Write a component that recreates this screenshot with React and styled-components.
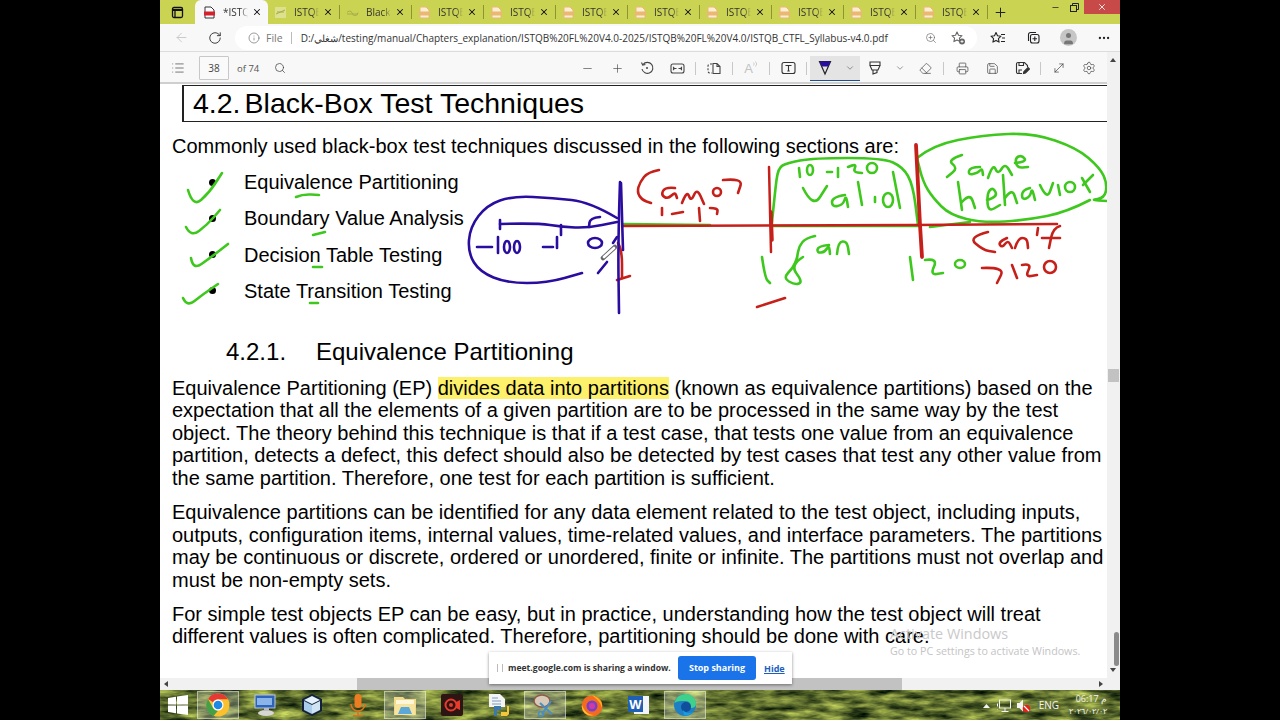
import React from "react";
import styled, { createGlobalStyle } from "styled-components";
import { X, Plus, Minus, ArrowLeft, RotateCw, Info, Search, ZoomIn, MoreHorizontal, List, ChevronDown, Printer, Save, Settings, MoveDiagonal, Eraser, User } from "lucide-react";

const Global = createGlobalStyle`
  html, body { margin: 0; padding: 0; background: #000; }
  body { font-family: "Liberation Sans", Arial, sans-serif; }
  #root { width: 1280px; height: 720px; overflow: hidden; }
`;

const Stage = styled.div`
  width: 1280px; height: 720px; background: #000; display: flex; justify-content: center;
`;
const Screen = styled.div`
  width: 960px; height: 720px; display: flex; flex-direction: column; position: relative; overflow: hidden; background: #fff;
`;

const TabStrip = styled.div`
  height: 24px; background: #cbd352; display: flex; align-items: stretch; flex: none;
`;
const WindowIcon = styled.div`
  width: 35px; display: flex; align-items: center; justify-content: center; color: #111;
`;
const Tab = styled.div`
  width: ${p => p.$active ? "73px" : "72px"};
  display: flex; align-items: center; position: relative; padding-left: ${p => p.$active ? "8px" : "6px"}; box-sizing: border-box;
  background: ${p => p.$active ? "#f8f8f8" : "transparent"};
  border-radius: ${p => p.$active ? "6px 6px 0 0" : "0"};
  &::after {
    content: ""; position: absolute; right: 0; top: 5px; bottom: 5px; width: 1px;
    background: ${p => p.$active ? "transparent" : "#8d9430"};
  }
`;
const TabLabel = styled.span`
  font: 10px "Open Sans", sans-serif; color: #333; width: 25px; margin-left: 7px; overflow: hidden; white-space: nowrap; flex: none;
  mask-image: linear-gradient(90deg, #000 70%, transparent 100%);
`;
const TabClose = styled.span`
  display: flex; color: #111; margin-left: 4px;
`;
const NewTab = styled.div`
  width: 24px; display: flex; align-items: center; justify-content: center; color: #222;
`;
const WindowControls = styled.div`
  margin-left: auto; display: flex; align-items: flex-start; height: 14px;
`;
const WinBtn = styled.div`
  width: ${p => p.$close ? "36px" : "19px"}; height: 14px; display: flex; align-items: center; justify-content: center;
  background: ${p => p.$close ? "#c84a48" : "transparent"}; color: ${p => p.$close ? "#fff" : "#222"};
`;

const AddressRow = styled.div`
  height: 28px; background: #f8f8f8; display: flex; align-items: center; flex: none; border-bottom: 1px solid #dcdcdc; box-sizing: border-box;
`;
const NavBtn = styled.div`
  width: 33px; display: flex; justify-content: center; color: ${p => p.$off ? "#c4c4c4" : "#333"};
  &:first-child { margin-left: 5px; }
`;
const UrlBox = styled.div`
  width: 742px; height: 24px; background: #fff; border-radius: 12px; margin-left: 4px; display: flex; align-items: center; padding-left: 13px; box-sizing: border-box;
  font: 11px "Open Sans", sans-serif; color: #444; flex: none;
`;
const UrlScheme = styled.span`
  color: #777; margin-left: 6px; font-size: 10.5px; padding-right: 8px; border-right: 1px solid #bbb; line-height: 12px;
`;
const UrlText = styled.span`
  margin-left: 9px; white-space: nowrap; font-size: 10px; color: #333;
`;
const UrlTools = styled.div`
  margin-left: auto; display: flex; gap: 14px; padding-right: 11px; color: #666; align-items: center;
`;
const BrowserTools = styled.div`
  display: flex; align-items: center; gap: 20px; margin-left: 13px; color: #222;
`;
const Avatar = styled.div`
  width: 17px; height: 17px; border-radius: 50%; background: #c6c6c6; display: flex; align-items: flex-end; justify-content: center; color: #777; overflow: hidden;
`;

const Workspace = styled.div`
  flex: 1; min-height: 0; display: flex;
`;
const DocColumn = styled.div`
  flex: 1; min-width: 0; display: flex; flex-direction: column;
`;
const PdfBar = styled.div`
  height: 32px; background: #f8f8f8; display: flex; align-items: center; flex: none; border-bottom: 2px solid #cfcfcf; box-sizing: border-box; color: #444; padding: 2px 3px 0 11px;
`;
const PageInput = styled.div`
  width: 30px; height: 24px; border: 1px solid #c8c8c8; background: #fafafa; margin-left: 14px; display: flex; align-items: center; justify-content: center; font: 10px "Open Sans", sans-serif; color: #444; border-radius: 1px; box-sizing: border-box; flex: none;
`;
const PageCount = styled.span`
  font: 9.5px "Open Sans", sans-serif; color: #555; margin-left: 8px; white-space: nowrap; flex: none;
`;
const FindBtn = styled.div`
  margin-left: 15px; display: flex; color: #444;
`;
const ToolGroup = styled.div`
  margin-left: auto; display: flex; align-items: center;
`;
const Tool = styled.div`
  width: ${p => p.$w || 30}px; height: 25px; display: flex; align-items: center; justify-content: center; flex: none; color: #444;
`;
const Sep = styled.div`
  width: 1px; height: 13px; background: #c8c8c8; margin: 0 3px; flex: none;
`;
const ActiveTool = styled.div`
  width: 50px; height: 25px; display: flex; background: #e4e4e4; border-bottom: 1px solid #1f4f8f; box-sizing: border-box; flex: none;
`;
const ReadAloud = styled.span`
  font: 13px "Liberation Sans", sans-serif; color: #c2c2c2; display: flex; align-items: flex-start;
`;

const Page = styled.div`
  flex: 1; min-height: 0; background: #fff; color: #000; position: relative; padding-left: 12px; overflow: hidden;
  font: 20px/22.5px "Liberation Sans", Arial, sans-serif;
`;
const HeadingBox = styled.div`
  margin: 1px 0 0 10px; height: 37px; border-style: solid; border-color: #222; border-width: 1px 0 1px 2px; display: flex; align-items: center; padding-left: 9px; box-sizing: border-box;
  font-size: 28.5px; white-space: nowrap;
`;
const HeadingNum = styled.span`margin-right: 4px;`;
const Intro = styled.p`margin: 13px 0 0; white-space: nowrap;`;
const Bullets = styled.ul`
  list-style: none; margin: 13.5px 0 0; padding: 0 0 0 72px;
`;
const BulletItem = styled.li`
  height: 36.3px; position: relative; white-space: nowrap;
  &::before {
    content: ""; position: absolute; left: -35px; top: 7.5px; width: 7px; height: 7px; border-radius: 50%; background: #000;
  }
`;
const SubHeading = styled.h3`
  margin: 22.8px 0 0 54px; font-weight: 400; font-size: 24px; line-height: 26px; display: flex; white-space: nowrap;
`;
const SubNum = styled.span`width: 90px;`;
const Para = styled.p`margin: 11.8px 0 0; white-space: nowrap;`;
const Line = styled.span`display: block; height: 22.5px;`;
const Mark = styled.span`background: #fdf06a;`;
const Ink = styled.svg`
  position: absolute; left: 0; top: 0; pointer-events: none;
`;
const Watermark = styled.div`
  position: absolute; left: 730px; top: 541px; color: #c9c9c9; font: 14.4px "Open Sans", sans-serif; white-space: nowrap; line-height: 18px;
`;
const WatermarkSub = styled.div`
  font-size: 10.7px; color: #c4c4c4; line-height: 16px;
`;

const VScroll = styled.div`
  width: 13px; flex: none; background: #f1f1f1; position: relative;
`;
const VThumb = styled.div`
  position: absolute; left: 7px; width: 5px; top: 580px; height: 34px; background: #8b8b8b; border-radius: 3px;
`;
const VMark = styled.div`
  position: absolute; left: 1px; right: 1px; top: 317px; height: 13px; background: #c2c2c2;
`;
const Arrow = styled.div`
  position: absolute; left: 3px; width: 0; height: 0; border-left: 3px solid transparent; border-right: 3px solid transparent;
  ${p => p.$up ? "top: 6px; border-bottom: 4px solid #444;" : "bottom: 6px; border-top: 4px solid #444;"}
`;
const HScroll = styled.div`
  height: 12px; flex: none; background: #f1f1f1; position: relative;
`;
const HThumb = styled.div`
  position: absolute; left: 197px; width: 545px; top: 0; bottom: 0; background: #c2c2c2;
`;
const HArrow = styled.div`
  position: absolute; top: 3px; width: 0; height: 0; border-top: 3px solid transparent; border-bottom: 3px solid transparent;
  ${p => p.$left ? "left: 4px; border-right: 4px solid #444;" : "right: 17px; border-left: 4px solid #444;"}
`;

const ShareBar = styled.div`
  position: absolute; left: 329px; top: 652px; width: 303px; height: 32px; background: #fff; box-shadow: 0 1px 3px rgba(0,0,0,.45);
  display: flex; align-items: center; box-sizing: border-box; padding-left: 8px; z-index: 3;
`;
const Grip = styled.span`
  width: 4px; height: 8px; border-left: 1px solid #bbb; border-right: 1px solid #bbb; margin-right: 5px; flex: none;
`;
const ShareText = styled.span`
  font: 700 8.6px "Open Sans", sans-serif; color: #333; white-space: nowrap; width: 162px; flex: none;
`;
const StopBtn = styled.div`
  margin-left: 8px; width: 78px; height: 24px; background: #1a73e8; border-radius: 3px; color: #fff; font: 700 9px/24px "Open Sans", sans-serif; text-align: center; flex: none;
`;
const HideLink = styled.span`
  margin-left: 8px; color: #1a5fc0; font: 700 9px "Open Sans", sans-serif; text-decoration: underline;
`;

const Taskbar = styled.div`
  height: 30px; flex: none; display: flex; align-items: center; position: relative; overflow: hidden; background: #5e6c2c;
`;
const Wallpaper = styled.svg`
  position: absolute; left: 0; top: 0;
`;
const StartSlot = styled.div`
  width: 35px; height: 28px; display: flex; align-items: center; justify-content: center; flex: none; position: relative;
`;
const TaskSlot = styled.div`
  width: 42px; height: 28px; margin: 0 2.35px; display: flex; align-items: center; justify-content: center; flex: none; box-sizing: border-box; position: relative;
  ${p => p.$on ? "background: rgba(255,255,255,.25); border: 1px solid rgba(255,255,255,.45);" : ""}
`;
const Tray = styled.div`
  margin-left: auto; display: flex; align-items: center; color: #f4f4f4; font: 10px "Open Sans", sans-serif; padding-right: 13px; position: relative;
`;
const TrayIcon = styled.span`
  display: flex; margin-right: ${p => p.$m || 6}px;
`;
const TrayLang = styled.span`margin: 0 10px 0 0;`;
const Clock = styled.div`
  display: flex; flex-direction: column; align-items: flex-end; line-height: 12px; font-size: 9px;
`;
const ClockDate = styled.span`font-size: 8px;`;

function smooth(pts) {
  if (pts.length < 3) return "M" + pts.map(p => p.join(" ")).join("L");
  let d = `M${pts[0][0]} ${pts[0][1]}`;
  for (let i = 1; i < pts.length - 1; i++) {
    const mx = (pts[i][0] + pts[i + 1][0]) / 2, my = (pts[i][1] + pts[i + 1][1]) / 2;
    d += `Q${pts[i][0]} ${pts[i][1]} ${mx} ${my}`;
  }
  const l = pts[pts.length - 1];
  return d + `L${l[0]} ${l[1]}`;
}

const G = "#3ec81e", R = "#c6201a", P = "#2a0d9e";
const inkGreen = [
  [[188,190],[193,207],[209,193],[222,173]],
  [[186,227],[191,237],[207,225],[220,210]],
  [[191,258],[193,270],[210,258],[228,244]],
  [[183,298],[187,307],[202,295],[218,284]],
  [[296,197],[303,194],[319,195]],
  [[313,235],[325,232]],
  [[313,267],[322,267]],
  [[310,303],[318,303]],
  [[623,224],[710,225]],
  [[773,226],[920,226]],
  [[772,222],[775,192],[778,168],[787,163],[813,158],[883,158],[903,167],[913,185],[918,225]],
  [[799,168],[800,177]],
  [[827,172],[832,172]],
  [[838,168],[838,177]],
  [[848,167],[857,163],[853,172],[862,173]],
  [[803,188],[813,208],[827,186]],
  [[845,195],[832,197],[832,207],[843,205],[846,195],[848,207]],
  [[858,182],[862,205]],
  [[875,197],[875,202]],
  [[893,172],[900,208]],
  [[917,158],[933,145],[983,135],[1033,133],[1077,148],[1100,168],[1107,183],[1105,198],[1090,200],[1107,201]],
  [[1090,200],[1067,212],[1027,220],[983,223],[950,215],[933,198],[923,182],[917,158]],
  [[930,227],[970,222]],
  [[962,155],[947,160],[958,168],[947,177]],
  [[980,167],[970,167],[968,175],[978,173],[982,168],[983,175]],
  [[988,178],[993,163],[998,175],[1005,163],[1012,175]],
  [[1015,163],[1027,162],[1022,155],[1015,158],[1017,168],[1028,167]],
  [[958,182],[962,210]],
  [[962,202],[970,193],[975,208]],
  [[987,200],[998,197],[993,187],[987,193],[988,212],[1000,205]],
  [[1003,175],[1005,205]],
  [[1005,198],[1012,188],[1017,203]],
  [[1030,188],[1022,190],[1022,200],[1030,197],[1032,188],[1035,200]],
  [[1040,185],[1047,200],[1053,183]],
  [[1058,185],[1060,195]],
  [[1082,178],[1090,192]],
  [[1083,185],[1093,175]],
  [[815,236],[806,238],[799,246],[797,258]],
  [[829,245],[818,246],[817,253],[825,252],[829,245],[830,254]],
  [[837,254],[838,242],[847,241],[849,254]],
  [[762,257],[765,278],[770,283]],
  [[803,257],[790,265],[803,282],[795,285],[783,278],[793,268],[797,258]],
  [[910,257],[913,280]],
  [[925,260],[938,258],[930,275],[943,273]],
];
const inkGreenEll = [[810,170,3,5],[872,168,5,5],[888,200,5,7],[1070,187,5,5],[960,264,5,4]];
const inkRed = [
  [[623,226],[769,226],[1057,224]],
  [[659,170],[648,172],[640,182],[637,192],[642,200],[651,203]],
  [[675,188],[665,187],[661,195],[668,199],[675,192],[677,198]],
  [[682,203],[687,190],[691,202],[697,188],[704,204]],
  [[723,180],[743,178],[738,193]],
  [[662,208],[662,215]],
  [[672,214],[683,212]],
  [[699,208],[700,221]],
  [[710,208],[718,208],[717,214]],
  [[988,232],[968,237],[983,250],[995,252]],
  [[1007,238],[998,242],[1002,248],[1008,240],[1012,248]],
  [[1015,248],[1018,238],[1027,238],[1028,248]],
  [[1038,228],[1037,235]],
  [[1060,226],[1053,228],[1049,248]],
  [[1042,238],[1060,238]],
  [[982,268],[1005,267],[997,283]],
  [[1012,265],[1017,278]],
  [[1022,265],[1032,263],[1025,277],[1037,275]],
  [[757,307],[785,298]],
  [[618,243],[622,250],[622,278]],
  [[617,280],[630,276]],
];
const inkPurple = [
  [[617,218],[590,202],[553,198],[513,196],[487,205],[470,227],[468,253],[480,272],[507,283],[547,283],[582,273]],
  [[500,220],[500,229]],
  [[500,224],[537,223],[563,227],[587,228],[617,222]],
  [[561,225],[561,235]],
  [[600,217],[590,218],[589,227]],
  [[477,247],[492,247]],
  [[498,237],[498,253]],
  [[543,247],[553,247]],
  [[557,237],[557,248]],
  [[620,182],[618,240],[619,313]],
  [[621,183],[623,250]],
  [[598,273],[607,262]],
  [[613,243],[617,237]],
];
const inkPurpleEll = [[507,247,3,6],[517,247,3,6],[595,243,7,5]];

const Annotations = () => (
  <Ink width="947" height="594" viewBox="160 84 947 594" fill="none" strokeLinecap="round" strokeLinejoin="round">
    {inkGreen.map((p, i) => <path key={i} d={smooth(p)} stroke={G} strokeWidth="2.6" />)}
    {inkGreenEll.map(([x, y, a, b], i) => <ellipse key={i} cx={x} cy={y} rx={a} ry={b} stroke={G} strokeWidth="2.6" />)}
    {inkRed.map((p, i) => <path key={i} d={smooth(p)} stroke={R} strokeWidth="2.6" />)}
    <ellipse cx="717" cy="192" rx="4" ry="4" stroke={R} strokeWidth="2.6" />
    <ellipse cx="1050" cy="267" rx="6" ry="6" stroke={R} strokeWidth="2.6" />
    <path d="M769 167L771 252" stroke={R} strokeWidth="2.5" />
    <path d="M771 212L772 240" stroke={R} strokeWidth="3.5" />
    <path d="M916 145L920 225L922 257" stroke={R} strokeWidth="3.8" />
    {inkPurple.map((p, i) => <path key={i} d={smooth(p)} stroke={P} strokeWidth="2.6" />)}
    {inkPurpleEll.map(([x, y, a, b], i) => <ellipse key={i} cx={x} cy={y} rx={a} ry={b} stroke={P} strokeWidth="2.6" />)}
    <path d="M603 258L615 247" stroke="#666" strokeWidth="4.5" />
    <path d="M604 257L614 248" stroke="#fff" strokeWidth="2.6" />
  </Ink>
);

const PdfIcon = ({ color = "#e9b872", active }) => (
  <svg width="13" height="13" viewBox="0 0 13 13" fill="none">
    <path d="M2 1h6l3 3v8H2z" fill={active ? "#fff" : "#fbeed3"} stroke={active ? "#333" : color} />
    <rect x="1" y="5.500" width="11" height="4" fill={active ? "#d3212d" : color} />
  </svg>
);
const LinkIcon = ({ wide }) => (
  <svg width="13" height="13" viewBox="0 0 13 13" fill="none" stroke="#a6ad4a" strokeWidth="1">
    {wide ? <path d="M1 6.500a3 3 0 0 1 5 0a3 3 0 0 0 6 0M1 8h11" /> : <><rect x="1" y="1" width="11" height="11" fill="#dde08c" stroke="none" /><path d="M2 8l9-4M3 6h7" /></>}
  </svg>
);
const WindowGlyph = () => (
  <svg width="13" height="13" viewBox="0 0 13 13" fill="none" stroke="#111" strokeWidth="1.300">
    <rect x="1.500" y="1.500" width="10" height="10" rx="1.500" /><path d="M1.500 4h10" strokeWidth="2" /><path d="M4 4v7.500" />
  </svg>
);
const RestoreGlyph = () => (
  <svg width="9" height="9" viewBox="0 0 9 9" fill="none" stroke="#222"><rect x=".5" y="2.500" width="6" height="6" /><path d="M2.500 2.500v-2h6v6h-2" /></svg>
);
const StarList = () => (
  <svg width="16" height="14" viewBox="0 0 16 14" fill="none" stroke="#222" strokeWidth="1.100" strokeLinejoin="round">
    <path d="M6 1.500l1.500 3.300 3.500.4-2.600 2.400.7 3.500L6 9.400l-3.100 1.700.7-3.500L1 5.200l3.500-.4z" /><path d="M11 3.500h4M12 7h3M11 10.500h4" />
  </svg>
);
const StarPlus = () => (
  <svg width="15" height="14" viewBox="0 0 15 14" fill="none" stroke="#666" strokeWidth="1.100" strokeLinejoin="round">
    <path d="M6 1l1.500 3.300 3.500.4-2.600 2.400.7 3.500L6 8.900l-3.100 1.700.7-3.500L1 4.700l3.500-.4z" /><circle cx="11" cy="10.500" r="3" fill="#666" stroke="none" /><path d="M9.500 10.500h3M11 9v3" stroke="#fff" strokeWidth=".8" />
  </svg>
);
const Collections = () => (
  <svg width="14" height="14" viewBox="0 0 14 14" fill="none" stroke="#222" strokeWidth="1.100">
    <path d="M2.500 10V3.500a2 2 0 0 1 2-2H10" /><rect x="4.500" y="3.500" width="8.500" height="8.500" rx="2" /><path d="M8.800 5.500v4.500M6.500 7.700h4.500" />
  </svg>
);
const RotateGlyph = () => (
  <svg width="14" height="14" viewBox="0 0 14 14" fill="none" stroke="#444" strokeWidth="1.100">
    <path d="M3 3.500a5.500 5.500 0 1 1-1 4.500" /><path d="M1.500 1.500l1.200 2.600 2.700-.6" /><circle cx="7" cy="7" r="1" fill="#444" stroke="none" />
  </svg>
);
const FitGlyph = () => (
  <svg width="15" height="13" viewBox="0 0 15 13" fill="none" stroke="#444" strokeWidth="1.100">
    <rect x="1" y="2" width="13" height="9" rx="2" /><path d="M3.500 6.500h3M8.500 6.500h3" /><path d="M3.500 5.500v2l1-1zM11.500 5.500v2l-1-1z" fill="#444" />
  </svg>
);
const PagesGlyph = () => (
  <svg width="14" height="13" viewBox="0 0 14 13" fill="none" stroke="#444" strokeWidth="1.100">
    <path d="M5 2H3a2 2 0 0 0-2 2v5a2 2 0 0 0 2 2h2" strokeDasharray="2 1.500" /><path d="M6 1.500h4l3 3v7H6zM10 1.500v3h3" />
  </svg>
);
const Waves = () => (
  <svg width="5" height="8" viewBox="0 0 5 8" fill="none" stroke="#c2c2c2" strokeWidth=".8"><path d="M.5 1.500q1.500 1.500 0 3M2.500.5q2.500 2.500 0 5" /></svg>
);
const TextBoxGlyph = () => (
  <svg width="15" height="14" viewBox="0 0 15 14" fill="none" stroke="#333" strokeWidth="1.100">
    <rect x="1" y="1.500" width="13" height="11" rx="2" /><path d="M4.500 4.500h6M7.500 4.500v5.500M6.300 10h2.400" />
  </svg>
);
const PenIcon = () => (
  <svg width="16" height="16" viewBox="0 0 16 16" fill="none">
    <path d="M2.500 1.500h11L8 14z" stroke="#222" strokeWidth="1.200" />
    <path d="M2.500 1.500h11l-2.400 5H5z" fill="#2a0d9e" />
  </svg>
);
const HighlighterIcon = () => (
  <svg width="16" height="16" viewBox="0 0 16 16" fill="none" stroke="#333" strokeWidth="1.100">
    <path d="M2.500 2h11M3 5.500h10L11 10H5zM6 10v4l4-1.500V10M3 2v3.500M13 2v3.500" />
  </svg>
);
const SaveEdit = () => (
  <svg width="15" height="14" viewBox="0 0 15 14" fill="none" stroke="#333" strokeWidth="1.100">
    <path d="M7 12.500H3a1.500 1.500 0 0 1-1.500-1.500V3A1.500 1.500 0 0 1 3 1.500h6.500l3 3V6" /><path d="M4 1.500v3h4.500v-3M4 12v-3h3" />
    <path d="M8.500 12.500l.5-2 4-4 1.500 1.500-4 4z" fill="#333" />
  </svg>
);
const WinLogo = () => (
  <svg width="20" height="20" viewBox="0 0 20 20" fill="#fff"><path d="M0 3l8-1.200V9.500H0zM9 1.600L20 0v9.500H9zM0 10.500h8v7.700L0 17zM9 10.500h11V20L9 18.400z" /></svg>
);
const Chrome = () => (
  <svg width="24" height="24" viewBox="0 0 24 24">
    <circle cx="12" cy="12" r="11.500" fill="#fbc02d" />
    <path d="M12 .5a11.500 11.500 0 0 1 10 5.750H12a5.750 5.750 0 0 0-5 2.900L2.100 5.900A11.500 11.500 0 0 1 12 .5z" fill="#e53935" />
    <path d="M2.100 5.900L7 14.900a5.750 5.750 0 0 0 5 2.850L7.500 23A11.500 11.500 0 0 1 2.100 5.900z" fill="#43a047" />
    <circle cx="12" cy="12" r="5.500" fill="#fff" /><circle cx="12" cy="12" r="4.300" fill="#1e88e5" />
  </svg>
);
const RemoteIcon = () => (
  <svg width="24" height="24" viewBox="0 0 24 24">
    <rect x="2" y="2" width="20" height="13" fill="#2d63b8" stroke="#b9c8dc" /><rect x="4" y="5" width="15" height="7" fill="#8bb5e8" />
    <ellipse cx="13" cy="20" rx="8" ry="3" fill="#d6d6d6" /><rect x="11" y="15" width="5" height="3" fill="#bbb" />
  </svg>
);
const CubeIcon = () => (
  <svg width="24" height="24" viewBox="0 0 24 24">
    <path d="M12 1l10 5v12l-10 5L2 18V6z" fill="#12203a" />
    <path d="M12 3l8 4-8 4-8-4z" fill="#e4f1fb" /><path d="M4 8l8 4v9l-8-4z" fill="#a9cdea" /><path d="M20 8l-8 4v9l8-4z" fill="#cfe3f2" />
  </svg>
);
const MicIcon = () => (
  <svg width="24" height="24" viewBox="0 0 24 24" fill="none">
    <rect x="8.500" y="1" width="7" height="14" rx="3.500" fill="#ee7d22" />
    <path d="M5 11a7 7 0 0 0 14 0M12 18v4M7 22.500h10" stroke="#d9731e" strokeWidth="1.600" />
  </svg>
);
const FolderIcon = () => (
  <svg width="24" height="24" viewBox="0 0 24 24">
    <path d="M1 4h9l2 2h11v16H1z" fill="#f1d98a" /><rect x="3" y="7" width="18" height="5" fill="#fdf6d8" />
    <rect x="2" y="11" width="20" height="11" fill="#f6e3a0" /><path d="M8 14h8l3 7H5z" fill="#5aa7d8" />
  </svg>
);
const RecIcon = () => (
  <svg width="24" height="24" viewBox="0 0 24 24" fill="none">
    <rect x="1" y="1" width="22" height="22" rx="2" fill="#2c1512" />
    <circle cx="11" cy="12" r="5.500" stroke="#e83b2e" strokeWidth="2" /><circle cx="11" cy="12" r="2" fill="#e83b2e" /><path d="M16 9l4-2v10l-4-2z" fill="#e83b2e" />
  </svg>
);
const PyIcon = () => (
  <svg width="24" height="24" viewBox="0 0 24 24">
    <path d="M3 1h11l5 5v8H3z" fill="#f4f4f4" /><path d="M6 5h6M6 8h9M6 11h9" stroke="#7a9bc4" />
    <path d="M8 13h7v4H11v6H8z" fill="#3d78ad" /><path d="M21 13v6h-6v4h6l2-2v-8z" fill="#f2c83a" />
  </svg>
);
const SnipIcon = () => (
  <svg width="24" height="24" viewBox="0 0 24 24" fill="none">
    <ellipse cx="9" cy="8" rx="8" ry="6" fill="#d8c9b8" stroke="#8c5a4a" strokeWidth="1.500" />
    <path d="M7 10l12 11M18 8L9 21" stroke="#4a8fc0" strokeWidth="2" /><circle cx="8" cy="21" r="2.500" stroke="#4a8fc0" strokeWidth="1.500" />
  </svg>
);
const FoxIcon = () => (
  <svg width="24" height="24" viewBox="0 0 24 24">
    <circle cx="12" cy="13" r="10.500" fill="#f26b21" /><path d="M12 2c6 2 11 6 10 13C20 8 16 6 12 2z" fill="#ffb01f" />
    <circle cx="12" cy="13" r="5.500" fill="#7b3fc4" /><circle cx="12" cy="13" r="3" fill="#ce3ba4" /><path d="M2 12c2 6 6 10 12 10-6 2-13-3-12-10z" fill="#fcc431" />
  </svg>
);
const WordIcon = () => (
  <svg width="24" height="24" viewBox="0 0 24 24">
    <rect x="7" y="3" width="15" height="18" fill="#f2f6fb" /><rect x="1" y="3" width="15" height="16" fill="#1f5fb4" />
    <text x="8.500" y="16" textAnchor="middle" fill="#fff" fontSize="13" fontWeight="700" fontFamily="Liberation Sans">W</text>
  </svg>
);
const EdgeIcon = () => (
  <svg width="24" height="24" viewBox="0 0 24 24">
    <circle cx="12" cy="12" r="11" fill="#1f7fc4" />
    <path d="M1.500 10C3 3 9 .5 14 1c5 .6 9 4.500 9 10 0 3-3 4.500-6 4 2-3 0-7-4.500-7C8 8 4 8 1.500 10z" fill="#3fd08a" />
    <circle cx="13" cy="14" r="5" fill="#0f4f9c" /><path d="M10 17c2 3 6 4 10 2-2 3-6 4-9 3z" fill="#1a9de0" />
  </svg>
);
const TrayUp = () => (
  <svg width="7" height="5" viewBox="0 0 7 5" fill="#f4f4f4"><path d="M0 5l3.500-4L7 5z" /></svg>
);
const NetworkIcon = () => (
  <svg width="15" height="15" viewBox="0 0 15 15" fill="none" stroke="#f4f4f4" strokeWidth="1">
    <rect x="2.500" y="2" width="11" height="8" /><path d="M8 10v3M4.500 13.500h7" /><path d="M.5 5.500v3M.5 11v.5" />
  </svg>
);
const VolumeIcon = () => (
  <svg width="15" height="15" viewBox="0 0 15 15">
    <path d="M1 5h2.500L7 1.500v12L3.500 10H1z" fill="#f4f4f4" /><circle cx="10.500" cy="10.500" r="3.800" fill="#e0241c" /><path d="M8 8l5 5" stroke="#fff" strokeWidth="1.100" />
  </svg>
);

const taskApps = [
  { c: <Chrome />, on: true }, { c: <RemoteIcon /> }, { c: <CubeIcon /> }, { c: <MicIcon /> },
  { c: <FolderIcon />, on: true }, { c: <RecIcon /> }, { c: <PyIcon /> }, { c: <SnipIcon />, on: true },
  { c: <FoxIcon /> }, { c: <WordIcon /> }, { c: <EdgeIcon />, on: true },
];
const tabs = ["ISTQB", "Black", "ISTQB", "ISTQB", "ISTQB", "ISTQB", "ISTQB", "ISTQB", "ISTQB", "ISTQB"];

export default function App() {
  return (
    <Stage>
      <Global />
      <Screen>
        <TabStrip>
          <WindowIcon><WindowGlyph /></WindowIcon>
          <Tab $active>
            <PdfIcon active /><TabLabel>*ISTQ</TabLabel><TabClose><X size={10} strokeWidth={2.5} /></TabClose>
          </Tab>
          {tabs.map((t, i) => (
            <Tab key={i}>
              {i === 0 ? <LinkIcon /> : i === 1 ? <LinkIcon wide /> : <PdfIcon />}
              <TabLabel>{t}</TabLabel>
              <TabClose><X size={10} strokeWidth={2.5} /></TabClose>
            </Tab>
          ))}
          <NewTab><Plus size={15} strokeWidth={1.6} /></NewTab>
          <WindowControls>
            <WinBtn><Minus size={9} strokeWidth={2} /></WinBtn>
            <WinBtn><RestoreGlyph /></WinBtn>
            <WinBtn $close><X size={10} strokeWidth={2} /></WinBtn>
          </WindowControls>
        </TabStrip>
        <AddressRow>
          <NavBtn $off><ArrowLeft size={15} strokeWidth={1.4} /></NavBtn>
          <NavBtn><RotateCw size={14} strokeWidth={1.6} /></NavBtn>
          <UrlBox>
            <Info size={12} strokeWidth={1.3} color="#666" />
            <UrlScheme>File</UrlScheme>
            <UrlText>D:/شغلي/testing/manual/Chapters_explanation/ISTQB%20FL%20V4.0-2025/ISTQB%20FL%20V4.0/ISTQB_CTFL_Syllabus-v4.0.pdf</UrlText>
            <UrlTools><ZoomIn size={12} strokeWidth={1.3} /><StarPlus /></UrlTools>
          </UrlBox>
          <BrowserTools>
            <StarList />
            <Collections />
            <Avatar><User size={15} fill="#777" strokeWidth={0} /></Avatar>
            <MoreHorizontal size={14} strokeWidth={2} />
          </BrowserTools>
        </AddressRow>
        <Workspace>
          <DocColumn>
            <PdfBar>
              <List size={14} strokeWidth={1.2} />
              <PageInput>38</PageInput>
              <PageCount>of 74</PageCount>
              <FindBtn><Search size={12} strokeWidth={1.5} /></FindBtn>
              <ToolGroup>
                <Tool><Minus size={13} strokeWidth={1.2} /></Tool>
                <Tool><Plus size={13} strokeWidth={1.2} /></Tool>
                <Tool><RotateGlyph /></Tool>
                <Tool><FitGlyph /></Tool>
                <Sep />
                <Tool><PagesGlyph /></Tool>
                <Sep />
                <Tool><ReadAloud>A<Waves /></ReadAloud></Tool>
                <Sep />
                <Tool><TextBoxGlyph /></Tool>
                <Sep />
                <ActiveTool>
                  <Tool><PenIcon /></Tool>
                  <Tool $w={20}><ChevronDown size={10} strokeWidth={1.3} /></Tool>
                </ActiveTool>
                <Tool><HighlighterIcon /></Tool>
                <Tool $w={20}><ChevronDown size={10} strokeWidth={1.3} /></Tool>
                <Tool><Eraser size={13} strokeWidth={1.3} /></Tool>
                <Sep />
                <Tool><Printer size={13} strokeWidth={1.3} /></Tool>
                <Tool><Save size={13} strokeWidth={1.3} /></Tool>
                <Tool><SaveEdit /></Tool>
                <Sep />
                <Tool><MoveDiagonal size={14} strokeWidth={1.2} /></Tool>
                <Tool><Settings size={14} strokeWidth={1.2} /></Tool>
              </ToolGroup>
            </PdfBar>
            <Page>
              <HeadingBox><HeadingNum>4.2.</HeadingNum>Black-Box Test Techniques</HeadingBox>
              <Intro>Commonly used black-box test techniques discussed in the following sections are:</Intro>
              <Bullets>
                <BulletItem>Equivalence Partitioning</BulletItem>
                <BulletItem>Boundary Value Analysis</BulletItem>
                <BulletItem>Decision Table Testing</BulletItem>
                <BulletItem>State Transition Testing</BulletItem>
              </Bullets>
              <SubHeading><SubNum>4.2.1.</SubNum>Equivalence Partitioning</SubHeading>
              <Para>
                <Line>Equivalence Partitioning (EP) <Mark>divides data into partitions</Mark> (known as equivalence partitions) based on the</Line>
                <Line>expectation that all the elements of a given partition are to be processed in the same way by the test</Line>
                <Line>object. The theory behind this technique is that if a test case, that tests one value from an equivalence</Line>
                <Line>partition, detects a defect, this defect should also be detected by test cases that test any other value from</Line>
                <Line>the same partition. Therefore, one test for each partition is sufficient.</Line>
              </Para>
              <Para>
                <Line>Equivalence partitions can be identified for any data element related to the test object, including inputs,</Line>
                <Line>outputs, configuration items, internal values, time-related values, and interface parameters. The partitions</Line>
                <Line>may be continuous or discrete, ordered or unordered, finite or infinite. The partitions must not overlap and</Line>
                <Line>must be non-empty sets.</Line>
              </Para>
              <Para>
                <Line>For simple test objects EP can be easy, but in practice, understanding how the test object will treat</Line>
                <Line>different values is often complicated. Therefore, partitioning should be done with care.</Line>
              </Para>
              <Annotations />
              <Watermark>Activate Windows<WatermarkSub>Go to PC settings to activate Windows.</WatermarkSub></Watermark>
            </Page>
          </DocColumn>
          <VScroll><Arrow $up /><VMark /><VThumb /><Arrow /></VScroll>
        </Workspace>
        <HScroll><HArrow $left /><HThumb /><HArrow /></HScroll>
        <Taskbar>
          <Wallpaper width="960" height="30">
            <filter id="wall" x="0" y="0" width="100%" height="100%" colorInterpolationFilters="sRGB">
              <feTurbulence type="fractalNoise" baseFrequency=".035 .14" numOctaves="4" seed="4" />
              <feColorMatrix values="1.100 0 0 0 -.16  1.100 0 0 0 -.10  .5 0 0 0 -.06  0 0 0 0 1" />
            </filter>
            <rect width="960" height="30" filter="url(#wall)" />
          </Wallpaper>
          <StartSlot><WinLogo /></StartSlot>
          {taskApps.map((a, i) => <TaskSlot key={i} $on={a.on}>{a.c}</TaskSlot>)}
          <Tray>
            <TrayIcon $m={7}><TrayUp /></TrayIcon>
            <TrayIcon $m={4}><NetworkIcon /></TrayIcon>
            <TrayIcon $m={8}><VolumeIcon /></TrayIcon>
            <TrayLang>ENG</TrayLang>
            <Clock><span>06:17 م</span><ClockDate>٢٠٢٦/٠٢/٠٢</ClockDate></Clock>
          </Tray>
        </Taskbar>
        <ShareBar>
          <Grip />
          <ShareText>meet.google.com is sharing a window.</ShareText>
          <StopBtn>Stop sharing</StopBtn>
          <HideLink>Hide</HideLink>
        </ShareBar>
      </Screen>
    </Stage>
  );
}
